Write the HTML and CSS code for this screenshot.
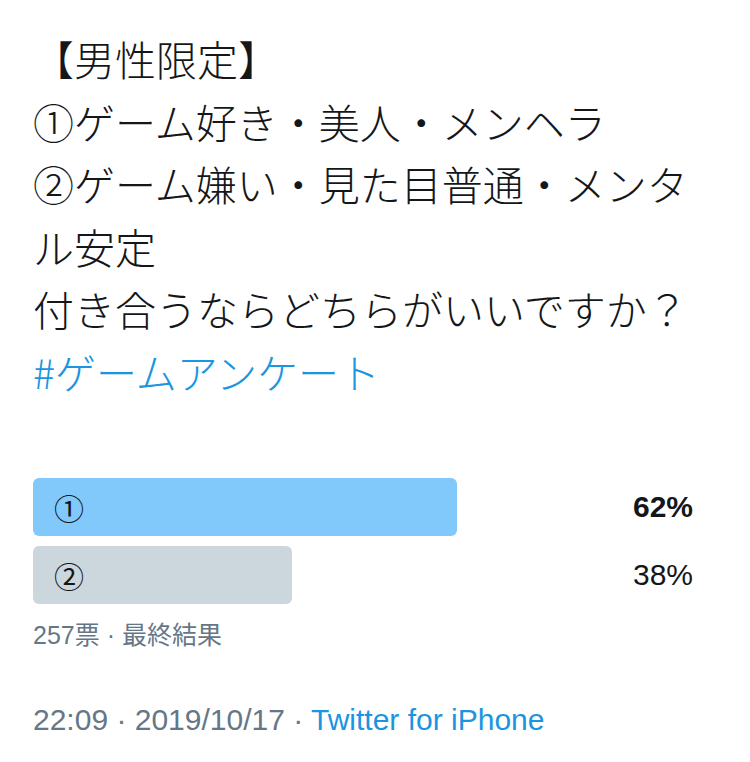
FILE: index.html
```html
<!DOCTYPE html>
<html lang="ja">
<head>
<meta charset="utf-8">
<link rel="stylesheet" href="styles.css">
</head>
<body>
<main class="tweet">
  <p class="text">【男性限定】<br>①ゲーム好き・美人・メンヘラ<br>②ゲーム嫌い・見た目普通・メンタル安定<br>付き合うならどちらがいいですか？<br><a class="tag">#ゲームアンケート</a></p>
  <section class="poll">
    <div class="row">
      <div class="bar bar-win" style="width: 424px"><span class="label">①</span></div>
      <span class="pct pct-win">62%</span>
    </div>
    <div class="row">
      <div class="bar bar-lose" style="width: 259px"><span class="label">②</span></div>
      <span class="pct">38%</span>
    </div>
    <p class="votes">257票 · 最終結果</p>
  </section>
  <p class="meta">22:09 · 2019/10/17 · <a class="source">Twitter for iPhone</a></p>
</main>
</body>
</html>
```
FILE: styles.css
```css
html, body {
  margin: 0;
  padding: 0;
  background: #ffffff;
}
body {
  width: 750px;
  height: 762px;
  overflow: hidden;
}
.tweet {
  padding: 27px 37px 0 33px;
  font-family: "Liberation Sans", "Noto Sans CJK JP", sans-serif;
  color: #14171a;
}
.text {
  margin: 0;
  font-family: "Noto Sans CJK JP", sans-serif;
  font-weight: 300;
  font-size: 41px;
  line-height: 62.5px;
  width: 680px;
}
.tag {
  color: #1b95e0;
}
.poll {
  margin-top: 76px;
  width: 660px;
}
.row {
  position: relative;
  height: 58px;
  margin-bottom: 10px;
  display: flex;
  align-items: center;
}
.bar {
  height: 58px;
  border-radius: 6px;
  display: flex;
  align-items: center;
  box-sizing: border-box;
  padding-left: 21px;
}
.bar-win {
  background: #80c9fa;
}
.bar-lose {
  background: #ccd6dd;
}
.label {
  font-family: "Noto Sans CJK JP", sans-serif;
  font-size: 30px;
  line-height: 1;
}
.pct {
  position: absolute;
  right: 0;
  top: 0;
  height: 58px;
  line-height: 58px;
  font-size: 30px;
  color: #14171a;
}
.pct-win {
  font-weight: bold;
}
.votes {
  margin: 16px 0 0;
  font-size: 25px;
  line-height: 30px;
  color: #657786;
}
.meta {
  margin: 52px 0 0;
  font-size: 30px;
  line-height: 36px;
  color: #657786;
}
.source {
  color: #1b95e0;
}
```
